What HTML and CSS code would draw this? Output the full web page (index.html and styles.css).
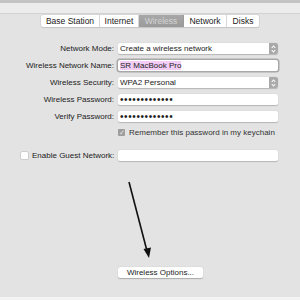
FILE: index.html
```html
<!DOCTYPE html>
<html lang="en">
<head>
    <meta charset="UTF-8">
    <title>AirPort Utility - Wireless</title>
    <link rel="stylesheet" href="styles.css">
</head>
<body>

<div class="window">
    <div class="titlebar"></div>

    <div class="tabs">
        <div class="tab">Base Station</div>
        <div class="tab">Internet</div>
        <div class="tab selected">Wireless</div>
        <div class="tab">Network</div>
        <div class="tab">Disks</div>
    </div>

    <div class="form">
        <label class="label">Network Mode:</label>
        <div class="popup">Create a wireless network<span class="stepper"></span></div>

        <label class="label">Wireless Network Name:</label>
        <div class="field focused"><span class="hilite">SR MacBook Pro</span></div>

        <label class="label">Wireless Security:</label>
        <div class="popup">WPA2 Personal<span class="stepper"></span></div>

        <label class="label">Wireless Password:</label>
        <div class="field dots">&#8226;&#8226;&#8226;&#8226;&#8226;&#8226;&#8226;&#8226;&#8226;&#8226;&#8226;&#8226;&#8226;</div>

        <label class="label">Verify Password:</label>
        <div class="field dots">&#8226;&#8226;&#8226;&#8226;&#8226;&#8226;&#8226;&#8226;&#8226;&#8226;&#8226;&#8226;&#8226;</div>

        <span></span>
        <div class="check-row"><span class="box checked">&#10003;</span>Remember this password in my keychain</div>
    </div>

    <div class="form guest">
        <label class="label"><span class="box"></span>Enable Guest Network:</label>
        <div class="field"></div>
    </div>

    <div class="form footer">
        <span></span>
        <div><button class="btn">Wireless Options...</button></div>
    </div>

    <svg class="arrow" width="300" height="300" viewBox="0 0 300 300">
        <line x1="129" y1="182" x2="147" y2="251" stroke="#111" stroke-width="1.6"/>
        <polygon points="143.5,249 151,247.5 149,258" fill="#111"/>
    </svg>
</div>

</body>
</html>
```

FILE: styles.css
```css
body {
    margin: 0;
    padding: 0;
    font-family: 'Liberation Sans', Arial, sans-serif;
    font-size: 8px;
    color: #222;
    background-color: #e3e3e3;
}
.window {
    position: relative;
    width: 300px;
    height: 300px;
    overflow: hidden;
    background: #e3e3e3;
    border-bottom: 3px solid #f3f3f3;
    box-sizing: border-box;
}
.titlebar {
    height: 10px;
    background: #ececec;
    border-top: 3px solid #c4c4c4;
    border-bottom: 1px solid #d2d2d2;
}
.tabs {
    display: flex;
    width: max-content;
    margin: 1px auto 0;
    background: #fff;
    border-radius: 2px;
    font-size: 8.5px;
    box-shadow: 0 0 0 0.5px #c8c8c8, 0 1px 1px rgba(0,0,0,0.15);
}
.tab {
    height: 12px;
    line-height: 12px;
    text-align: center;
    border-right: 1px solid #d6d6d6;
}
.tab:nth-child(1) { width: 58px; }
.tab:nth-child(2) { width: 38px; }
.tab:nth-child(3) { width: 44px; }
.tab:nth-child(4) { width: 42px; }
.tab:nth-child(5) { width: 32px; border-right: none; }
.tab.selected {
    background: linear-gradient(#a8a8a8, #9a9a9a);
    color: #d4d4d4;
    border-right-color: #9a9a9a;
}
.form {
    display: grid;
    grid-template-columns: 114px 160px;
    column-gap: 4px;
    row-gap: 6px;
    grid-auto-rows: 11px;
    margin-top: 16px;
}
.label {
    text-align: right;
    line-height: 11px;
    white-space: nowrap;
}
.popup, .field {
    position: relative;
    background: #fff;
    line-height: 11px;
    padding-left: 2px;
    border-radius: 2px;
    box-shadow: 0 0.5px 1px rgba(0,0,0,0.2);
}
.stepper {
    position: absolute;
    right: 0;
    top: 0;
    width: 9px;
    height: 11px;
    background: #a9a9a9;
    border-radius: 0 2px 2px 0;
}
.stepper::before, .stepper::after {
    content: "";
    position: absolute;
    left: 3px;
    width: 2px;
    height: 2px;
    border-left: 1px solid #fff;
    border-top: 1px solid #fff;
}
.stepper::before {
    top: 2.5px;
    transform: rotate(45deg);
}
.stepper::after {
    top: 5.5px;
    transform: rotate(-135deg);
}
.field.focused {
    box-shadow: 0 0 0 1.5px #a8a8a8;
}
.hilite {
    background: #f3cdf6;
}
.dots {
    font-size: 10px;
    letter-spacing: 0.6px;
    line-height: 11px;
}
.check-row {
    display: flex;
    align-items: center;
    gap: 4px;
    margin-top: -3px;
    color: #333;
    white-space: nowrap;
}
.box {
    display: inline-block;
    flex-shrink: 0;
    width: 7px;
    height: 7px;
    background: #fff;
    border-radius: 1px;
    box-shadow: 0 0 0 0.5px #b8b8b8;
    font-size: 7px;
    line-height: 7px;
    text-align: center;
}
.box.checked {
    background: #9d9d9d;
    color: #e8e8e8;
    box-shadow: none;
}
.form.guest {
    margin-top: 11px;
}
.guest .label {
    display: flex;
    align-items: center;
    justify-content: flex-start;
    padding-left: 21px;
    gap: 4px;
}
.form.footer {
    margin-top: 106px;
}
.btn {
    width: 85px;
    height: 11px;
    padding: 0;
    border: none;
    background: #fff;
    border-radius: 2px;
    font-family: inherit;
    font-size: 8px;
    color: #222;
    box-shadow: 0 0.5px 1px rgba(0,0,0,0.25);
}
.arrow {
    position: absolute;
    left: 0;
    top: 0;
}
```
